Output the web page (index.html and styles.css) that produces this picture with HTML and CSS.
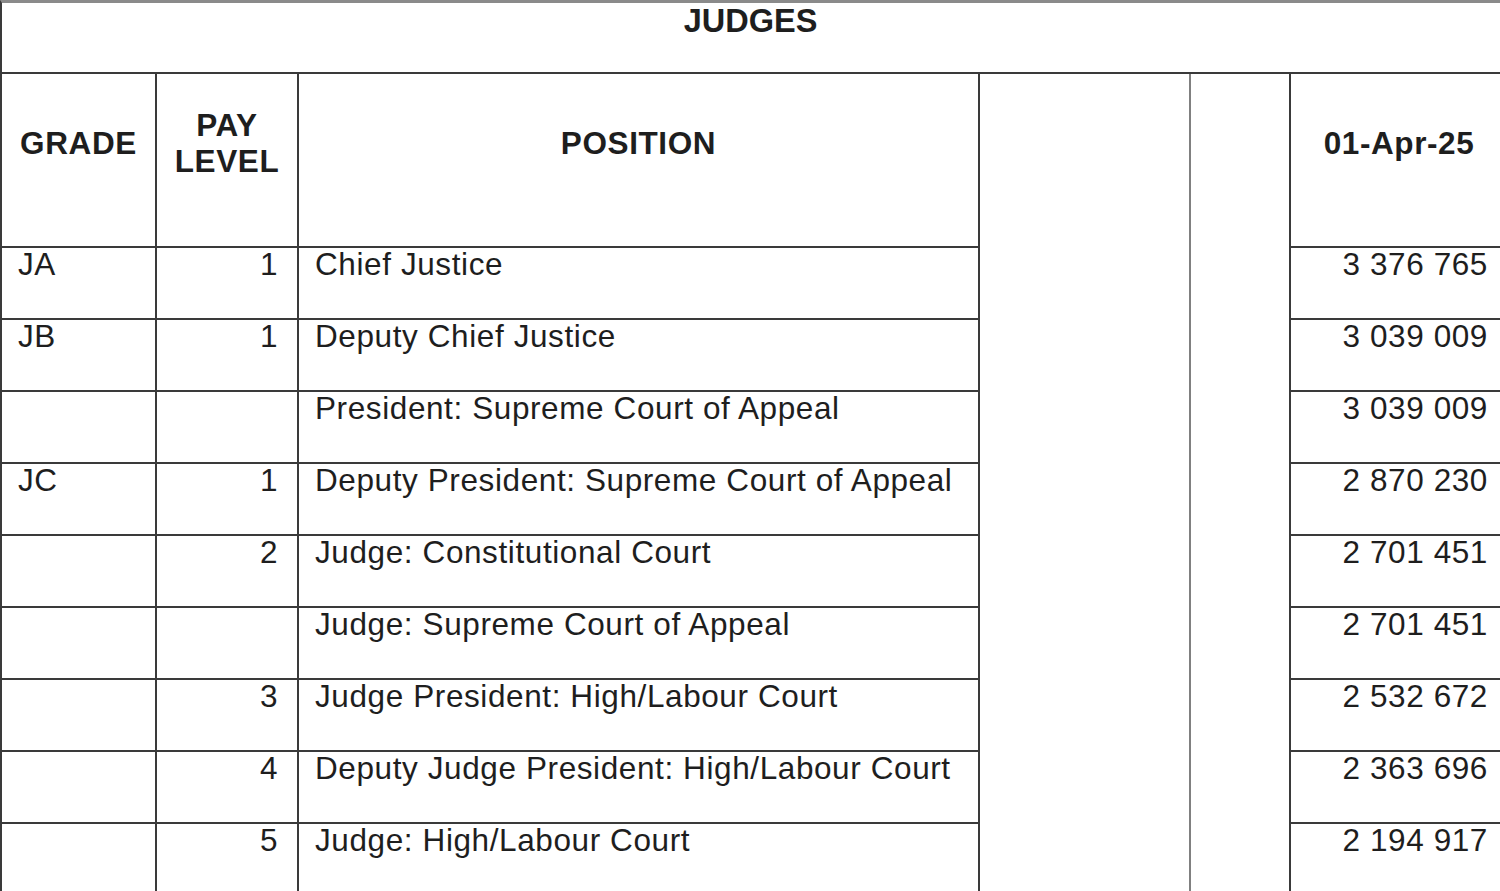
FILE: index.html
```html
<!DOCTYPE html>
<html lang="en">
<head>
<meta charset="utf-8">
<title>Judges</title>
<link rel="stylesheet" href="styles.css">
</head>
<body>
<div class="sheet">
  <div class="title">JUDGES</div>
  <div class="grid">
    <div class="blank b4"></div>
    <div class="blank b5"></div>

    <div class="cell head c1">GRADE</div>
    <div class="cell head c2">PAY<br>LEVEL</div>
    <div class="cell head c3">POSITION</div>
    <div class="cell head c6">01-Apr-25</div>

    <div class="cell c1">JA</div>
    <div class="cell c2">1</div>
    <div class="cell c3">Chief Justice</div>
    <div class="cell c6">3 376 765</div>

    <div class="cell c1">JB</div>
    <div class="cell c2">1</div>
    <div class="cell c3">Deputy Chief Justice</div>
    <div class="cell c6">3 039 009</div>

    <div class="cell c1"></div>
    <div class="cell c2"></div>
    <div class="cell c3">President: Supreme Court of Appeal</div>
    <div class="cell c6">3 039 009</div>

    <div class="cell c1">JC</div>
    <div class="cell c2">1</div>
    <div class="cell c3">Deputy President: Supreme Court of Appeal</div>
    <div class="cell c6">2 870 230</div>

    <div class="cell c1"></div>
    <div class="cell c2">2</div>
    <div class="cell c3">Judge: Constitutional Court</div>
    <div class="cell c6">2 701 451</div>

    <div class="cell c1"></div>
    <div class="cell c2"></div>
    <div class="cell c3">Judge: Supreme Court of Appeal</div>
    <div class="cell c6">2 701 451</div>

    <div class="cell c1"></div>
    <div class="cell c2">3</div>
    <div class="cell c3">Judge President: High/Labour Court</div>
    <div class="cell c6">2 532 672</div>

    <div class="cell c1"></div>
    <div class="cell c2">4</div>
    <div class="cell c3">Deputy Judge President: High/Labour Court</div>
    <div class="cell c6">2 363 696</div>

    <div class="cell c1"></div>
    <div class="cell c2">5</div>
    <div class="cell c3">Judge: High/Labour Court</div>
    <div class="cell c6">2 194 917</div>
  </div>
</div>
</body>
</html>
```

FILE: styles.css
```css
html, body {
  margin: 0;
  padding: 0;
  background: #ffffff;
  overflow: hidden;
}

body {
  font-family: "Liberation Sans", Arial, sans-serif;
  color: #1e1e1e;
}

.sheet {
  width: 1507px;
}

.title {
  box-sizing: border-box;
  height: 74px;
  border-top: 3px solid #8a8a8a;
  border-left: 2px solid #3a3a3a;
  border-bottom: 2px solid #3a3a3a;
  text-align: center;
  font-weight: bold;
  font-size: 32.5px;
  line-height: 36px;
  padding: 0 8px 0 0;
}

.grid {
  display: grid;
  grid-template-columns: 155px 142px 681px 211px 100px 216px;
  grid-template-rows: 174px repeat(9, 72px);
  border-left: 2px solid #3a3a3a;
}

.cell {
  box-sizing: border-box;
  border-bottom: 2px solid #3a3a3a;
  border-right: 2px solid #3a3a3a;
  font-size: 31.5px;
  line-height: 32px;
  letter-spacing: 0.6px;
  white-space: nowrap;
}

.blank {
  box-sizing: border-box;
  grid-row: 1 / span 10;
}

.b4 {
  grid-column: 4;
  border-right: 2px solid #808080;
}

.b5 {
  grid-column: 5;
  border-right: 2px solid #3a3a3a;
}

.c1 {
  grid-column: 1;
  padding-left: 16px;
}

.c2 {
  grid-column: 2;
  text-align: right;
  padding-right: 19px;
}

.c3 {
  grid-column: 3;
  padding-left: 16px;
}

.c6 {
  grid-column: 6;
  text-align: right;
  padding-right: 19px;
  border-right: none;
}

.head {
  display: flex;
  flex-direction: column;
  justify-content: center;
  align-items: center;
  text-align: center;
  font-weight: bold;
  line-height: 36px;
  padding: 0 0 34px 0;
}

.head.c6 {
  padding-right: 0;
}
```
